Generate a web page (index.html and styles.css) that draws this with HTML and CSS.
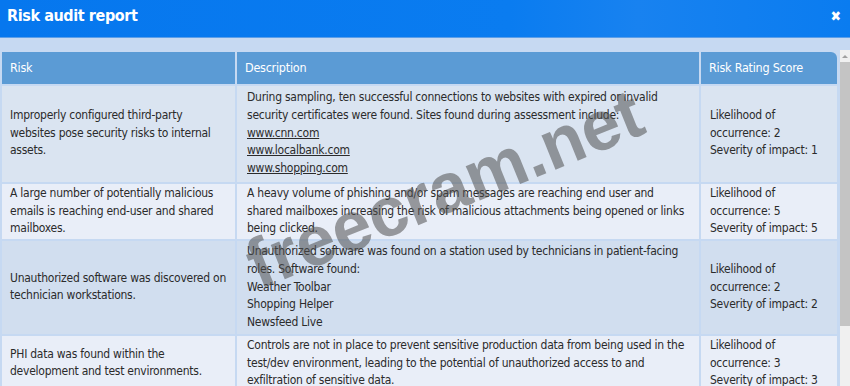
FILE: index.html
```html
<!DOCTYPE html>
<html>
<head>
<meta charset="utf-8">
<link rel="stylesheet" href="styles.css">
</head>
<body>
<div class="dialog">
  <div class="titlebar">
    <span class="title">Risk audit report</span>
    <span class="close">&#x2716;</span>
  </div>
  <div class="body">
    <div class="content">
      <table class="report">
        <colgroup>
          <col class="c1"><col class="c2"><col class="c3">
        </colgroup>
        <thead>
          <tr><th>Risk</th><th>Description</th><th class="last">Risk Rating Score</th></tr>
        </thead>
        <tbody>
          <tr class="r1">
            <td>Improperly configured third-party websites pose security risks to internal assets.</td>
            <td>During sampling, ten successful connections to websites with expired or invalid security certificates were found. Sites found during assessment include:<br><a>www.cnn.com</a><br><a>www.localbank.com</a><br><a>www.shopping.com</a></td>
            <td>Likelihood of occurrence: 2<br>Severity of impact: 1</td>
          </tr>
          <tr class="r2">
            <td>A large number of potentially malicious emails is reaching end-user and shared mailboxes.</td>
            <td>A heavy volume of phishing and/or spam messages are reaching end user and shared mailboxes increasing the risk of malicious attachments being opened or links being clicked.</td>
            <td>Likelihood of occurrence: 5<br>Severity of impact: 5</td>
          </tr>
          <tr class="r3">
            <td>Unauthorized software was discovered on technician workstations.</td>
            <td>Unauthorized software was found on a station used by technicians in patient-facing roles. Software found:<br>Weather Toolbar<br>Shopping Helper<br>Newsfeed Live</td>
            <td>Likelihood of occurrence: 2<br>Severity of impact: 2</td>
          </tr>
          <tr class="r2">
            <td>PHI data was found within the development and test environments.</td>
            <td>Controls are not in place to prevent sensitive production data from being used in the test/dev environment, leading to the potential of unauthorized access to and exfiltration of sensitive data.</td>
            <td>Likelihood of occurrence: 3<br>Severity of impact: 3</td>
          </tr>
        </tbody>
      </table>
    </div>
    <div class="scrollbar">
      <div class="arrow"></div>
      <div class="thumb"></div>
    </div>
  </div>
  <div class="watermark">freecram.net</div>
</div>
</body>
</html>
```

FILE: styles.css
```css
html, body {
  margin: 0;
  padding: 0;
  width: 850px;
  height: 386px;
  overflow: hidden;
  background: #c6d9f2;
}
.dialog {
  position: relative;
  width: 850px;
  height: 386px;
  overflow: hidden;
  font-family: "DejaVu Sans Condensed", "DejaVu Sans", sans-serif;
}
.titlebar {
  height: 38px;
  background: linear-gradient(90deg, #0677ee 0%, #0a7cf0 60%, #1882f0 75%, #0a7cf0 100%);
  display: flex;
  align-items: center;
  justify-content: space-between;
  padding: 0 9px 0 7px;
  box-sizing: border-box;
  border-bottom: 1px solid #5d9fe8;
}
.title {
  color: #fff;
  font-weight: bold;
  font-size: 16px;
  letter-spacing: -0.4px;
  margin-top: -6px;
}
.close {
  color: #fff;
  font-size: 14px;
  font-weight: bold;
  margin-top: -6px;
}
.body {
  display: flex;
  padding-top: 12px;
}
.content {
  width: 839px;
}
.report {
  border-collapse: separate;
  border-spacing: 2px;
  width: 839px;
  table-layout: fixed;
  font-size: 12px;
  letter-spacing: -0.25px;
  line-height: 17.75px;
  color: #2b2b2b;
}
.c1 { width: 233px; }
.c2 { width: 462px; }
.c3 { width: 136px; }
.report th {
  background: #5b9bd5;
  color: #fff;
  font-weight: normal;
  text-align: left;
  height: 32px;
  padding: 0 8px;
  font-size: 12.5px;
}
.report th.last {
  border-top-right-radius: 6px;
}
.report td {
  padding: 1px 8px;
  vertical-align: middle;
}
.report td:nth-child(2) {
  padding-left: 10px;
}
.report td:nth-child(3) {
  padding-left: 9px;
}
.r1 td { background: #dae4f1; padding-top: 3px; padding-bottom: 4px; }
.r2 td { background: #e9eef8; }
.r3 td { background: #d1deef; padding-top: 2px; padding-bottom: 2px; }
.report a {
  text-decoration: underline;
  color: #2b2b2b;
}
.scrollbar {
  width: 10px;
  margin-left: 1px;
  background: #f0f0f0;
  height: 340px;
  display: flex;
  flex-direction: column;
}
.arrow {
  height: 12px;
  display: flex;
  justify-content: center;
  align-items: center;
}
.arrow::before {
  content: "";
  border-left: 3px solid transparent;
  border-right: 3px solid transparent;
  border-bottom: 3px solid #a0a0a0;
}
.thumb {
  height: 264px;
  background: #c4c4c4;
}
.watermark {
  position: absolute;
  left: 262px;
  top: 232px;
  font-family: "Liberation Sans", Arial, sans-serif;
  font-weight: bold;
  font-size: 70px;
  line-height: 66px;
  color: rgba(80, 80, 80, 0.55);
  transform: rotate(-22deg);
  transform-origin: left bottom;
  white-space: nowrap;
  letter-spacing: 0;
}
```
